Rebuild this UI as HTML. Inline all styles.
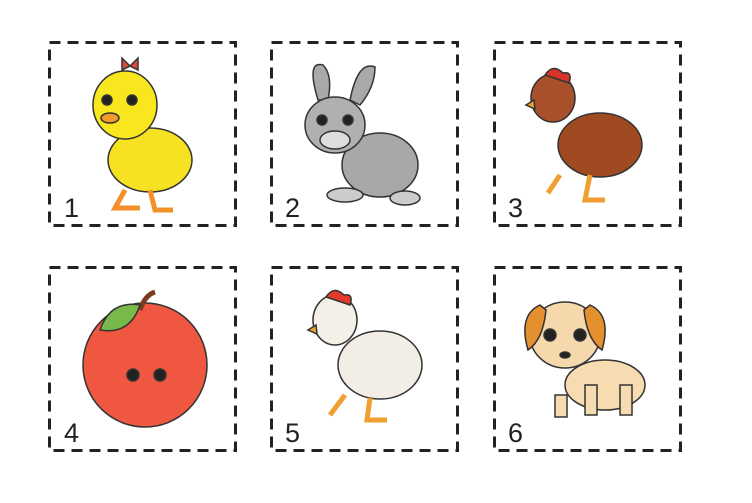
<!DOCTYPE html>
<html><head><style>
body{margin:0;width:752px;height:503px;background:#fff;position:relative;overflow:hidden;font-family:"Liberation Sans",sans-serif}
.b{position:absolute;width:187px;height:184px;box-sizing:border-box}
.b svg.f{position:absolute;left:0;top:0}
.n{position:absolute;left:16px;bottom:4px;font-size:27px;color:#222}
.a{position:absolute;left:0;top:0}
</style></head><body>
<svg width="752" height="503" style="position:absolute;left:0;top:0">
<g fill="none" stroke="#222" stroke-width="3" stroke-dasharray="11 7">
<rect x="49.5" y="42.5" width="186" height="183"/>
<rect x="271.5" y="42.5" width="186" height="183"/>
<rect x="494.5" y="42.5" width="186" height="183"/>
<rect x="49.5" y="267.5" width="186" height="183"/>
<rect x="271.5" y="267.5" width="186" height="183"/>
<rect x="494.5" y="267.5" width="186" height="183"/>
</g>
<g stroke="#333" stroke-width="1.5">
<!-- chick -->
<ellipse cx="150" cy="160" rx="42" ry="32" fill="#f6e222"/>
<ellipse cx="125" cy="105" rx="32" ry="34" fill="#f8e61e"/>
<path d="M130 66 l-8 -8 v12z M130 66 l8 -8 v12z" fill="#e04a3a"/>
<ellipse cx="110" cy="118" rx="9" ry="5" fill="#f39a2a"/>
<circle cx="107" cy="100" r="5" fill="#222"/><circle cx="132" cy="100" r="5" fill="#222"/>
<path d="M125 190 l-10 18 h25 M150 190 l5 20 h18" fill="none" stroke="#f3902a" stroke-width="5"/>
<!-- bunny -->
<path d="M318 100 q-12 -40 5 -35 q10 10 5 35z M350 100 q8 -40 25 -33 q0 20 -15 38z" fill="#a9a9a9"/>
<ellipse cx="380" cy="165" rx="38" ry="32" fill="#a8a8a8"/>
<ellipse cx="335" cy="125" rx="30" ry="28" fill="#b0b0b0"/>
<ellipse cx="335" cy="140" rx="15" ry="9" fill="#ddd"/>
<circle cx="322" cy="120" r="5" fill="#222"/><circle cx="348" cy="120" r="5" fill="#222"/>
<ellipse cx="345" cy="195" rx="18" ry="7" fill="#ccc"/>
<ellipse cx="405" cy="198" rx="15" ry="7" fill="#ccc"/>
<!-- hen brown -->
<ellipse cx="600" cy="145" rx="42" ry="32" fill="#a04a22"/>
<ellipse cx="553" cy="98" rx="22" ry="24" fill="#a8502a"/>
<path d="M545 75 q8 -12 18 -2 q10 -2 6 10z" fill="#d9342a"/>
<path d="M534 100 l-8 5 l9 4z" fill="#f0a030"/>
<path d="M560 175 l-12 18 M590 175 l-5 25 h20" fill="none" stroke="#f0a030" stroke-width="5"/>
<!-- apple -->
<circle cx="145" cy="365" r="62" fill="#ef5740"/>
<path d="M140 310 q5 -15 15 -18" fill="none" stroke="#7a3a1e" stroke-width="5"/>
<path d="M100 330 q10 -30 40 -25 q-10 30 -40 25z" fill="#79b84a"/>
<circle cx="133" cy="375" r="6" fill="#222"/><circle cx="160" cy="375" r="6" fill="#222"/>
<!-- white hen -->
<ellipse cx="380" cy="365" rx="42" ry="34" fill="#f2eee6"/>
<ellipse cx="335" cy="320" rx="22" ry="25" fill="#f4f0e8"/>
<path d="M326 297 q8 -12 18 -2 q10 -2 6 10z" fill="#e33a2a"/>
<path d="M316 325 l-8 5 l9 4z" fill="#f0a030"/>
<path d="M345 395 l-15 20 M370 398 l-3 22 h20" fill="none" stroke="#f0a030" stroke-width="5"/>
<!-- puppy -->
<ellipse cx="605" cy="385" rx="40" ry="25" fill="#f6dcb0"/>
<ellipse cx="565" cy="335" rx="35" ry="33" fill="#f5d9ad"/>
<path d="M540 305 q-22 10 -12 45 q15 -10 18 -40z M590 305 q22 10 12 45 q-15 -10 -18 -40z" fill="#e5902e"/>
<circle cx="550" cy="335" r="6" fill="#222"/><circle cx="580" cy="335" r="6" fill="#222"/>
<ellipse cx="565" cy="355" rx="5" ry="3" fill="#222"/>
<path d="M585 385 h12 v30 h-12z M620 385 h12 v30 h-12z M555 395 h12 v22 h-12z" fill="#f6dcb0"/>
</g>
<g font-family="Liberation Sans,sans-serif" font-size="27" fill="#222">
<text x="64" y="217">1</text><text x="285" y="217">2</text><text x="508" y="217">3</text>
<text x="64" y="442">4</text><text x="285" y="442">5</text><text x="508" y="442">6</text>
</g>
</svg>
</body></html>
